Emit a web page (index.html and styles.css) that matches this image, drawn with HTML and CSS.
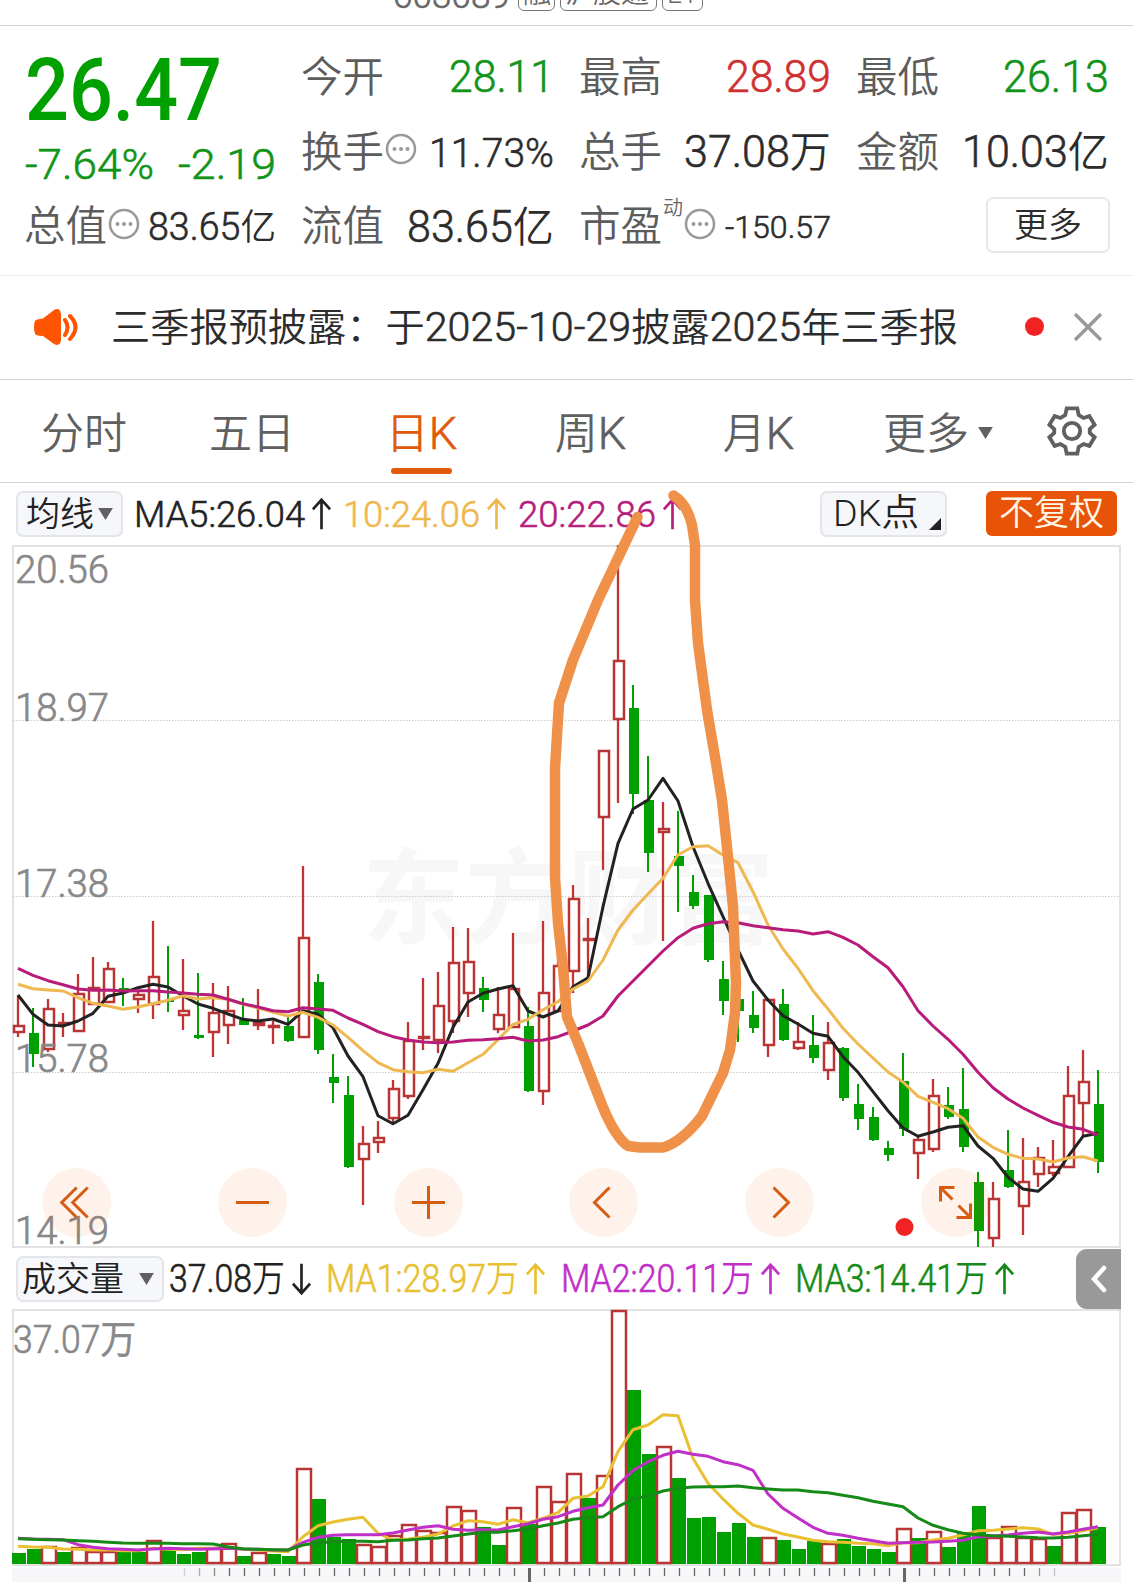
FILE: index.html
```html
<!DOCTYPE html>
<html lang="zh-CN">
<head>
<meta charset="utf-8">
<title>日K</title>
<link rel="stylesheet" href="styles.css">
</head>
<body>
<div class="app">
  <header class="top">
    <span class="code" data-fit="117">603089</span>
    <span class="badge" data-fit="37">融</span><span class="badge" data-fit="97">沪股通</span><span class="badge" data-fit="41">L1</span>
  </header>

  <section class="quote">
    <div class="price">
      <div class="last"><span data-fit="197">26.47</span></div>
      <div class="change"><span data-fit="129">-7.64%</span><span data-fit="98">-2.19</span></div>
    </div>
    <div class="cell"><span class="label">今开</span><span class="val down" data-fit="105">28.11</span></div>
    <div class="cell"><span class="label">最高</span><span class="val up" data-fit="105">28.89</span></div>
    <div class="cell"><span class="label">最低</span><span class="val down" data-fit="106">26.13</span></div>
    <div class="cell"><span class="label">换手</span><svg class="info" viewBox="0 0 32 32"><circle cx="16" cy="16" r="14"/><path d="M9.5 16h.01M16 16h.01M22.500 16h.01"/></svg><span class="val mid" data-fit="125">11.73%</span></div>
    <div class="cell"><span class="label">总手</span><span class="val" data-fit="147">37.08<i>万</i></span></div>
    <div class="cell"><span class="label">金额</span><span class="val" data-fit="147">10.03<i>亿</i></span></div>
    <div class="cell"><span class="label">总值</span><svg class="info" viewBox="0 0 32 32"><circle cx="16" cy="16" r="14"/><path d="M9.5 16h.01M16 16h.01M22.500 16h.01"/></svg><span class="val small" data-fit="128">83.65<i>亿</i></span></div>
    <div class="cell"><span class="label">流值</span><span class="val" data-fit="147">83.65<i>亿</i></span></div>
    <div class="cell"><span class="label">市盈</span><sup>动</sup><svg class="info" viewBox="0 0 32 32"><circle cx="16" cy="16" r="14"/><path d="M9.5 16h.01M16 16h.01M22.500 16h.01"/></svg><span class="val tiny" data-fit="106">-150.57</span></div>
    <div class="cell"><button class="more">更多</button></div>
  </section>

  <section class="news">
    <svg class="horn" viewBox="0 0 44 36"><path d="M2 11Q0 12 0 18T2 26Q5 27 9 27L20 35Q26 38 27 31V5Q26 -2 20 1L9 9.500Q5 9.500 2 11Z" fill="#ff5500"/><path d="M31 11Q36 18 31 26M36 7Q47 18 36 30" fill="none" stroke="#ff5500" stroke-width="4" stroke-linecap="round"/></svg>
    <span class="headline" data-fit="847">三季报预披露：于<b>2025-10-29</b>披露<b>2025</b>年三季报</span>
    <span class="dot"></span>
    <svg class="close" viewBox="0 0 30 30"><path d="M2 2L28 28M28 2L2 28"/></svg>
  </section>

  <nav class="tabs">
    <span class="tab">分时</span>
    <span class="tab">五日</span>
    <span class="tab active">日<b>K</b></span>
    <span class="tab">周<b>K</b></span>
    <span class="tab">月<b>K</b></span>
    <span class="tab last-tab">更多<svg class="tri" viewBox="0 0 16 13"><path d="M0 0H16L8 13Z"/></svg></span>
    <svg class="gear" viewBox="0 0 52 52"><path d="M20.500 2.500H31.500L33 9.500L38 12.500L44 10.500L49.500 19.500L44.500 24V28L49.500 32.500L44 41.500L38 39.500L33 42.500L31.500 49.500H20.500L19 42.500L14 39.500L8 41.500L2.500 32.500L7.500 28V24L2.500 19.500L8 10.500L14 12.500L19 9.500Z"/><circle cx="26" cy="26" r="8.500"/></svg>
  </nav>

  <div class="bar ma">
    <button class="pick">均线<svg class="tri" viewBox="0 0 16 13"><path d="M0 0H16L8 13Z"/></svg></button>
    <span class="ind black"><span data-fit="171">MA5:26.04</span><svg viewBox="0 0 20 34"><path d="M10 33V2M1 12L10 2L19 12"/></svg></span>
    <span class="ind gold"><span data-fit="137">10:24.06</span><svg viewBox="0 0 20 34"><path d="M10 33V2M1 12L10 2L19 12"/></svg></span>
    <span class="ind plum"><span data-fit="138">20:22.86</span><svg viewBox="0 0 20 34"><path d="M10 33V2M1 12L10 2L19 12"/></svg></span>
    <button class="pick dk"><span data-fit="86">DK点</span><svg class="corner" viewBox="0 0 12 12"><path d="M12 0V12H0Z"/></svg></button>
    <button class="adjust">不复权</button>
  </div>

  <svg class="kline" id="kline" viewBox="0 545 1133 703"></svg>

  <div class="bar vol">
    <button class="pick wide">成交量<svg class="tri" viewBox="0 0 16 13"><path d="M0 0H16L8 13Z"/></svg></button>
    <span class="ind black"><span data-fit="116">37.08<i>万</i></span><svg viewBox="0 0 20 34"><path d="M10 1V32M1 22L10 32L19 22"/></svg></span>
    <span class="ind yellow"><span data-fit="193">MA1:28.97<i>万</i></span><svg viewBox="0 0 20 34"><path d="M10 33V2M1 12L10 2L19 12"/></svg></span>
    <span class="ind violet"><span data-fit="193">MA2:20.11<i>万</i></span><svg viewBox="0 0 20 34"><path d="M10 33V2M1 12L10 2L19 12"/></svg></span>
    <span class="ind green"><span data-fit="193">MA3:14.41<i>万</i></span><svg viewBox="0 0 20 34"><path d="M10 33V2M1 12L10 2L19 12"/></svg></span>
    <button class="fold"><svg viewBox="0 0 16 28"><path d="M13 3L3 14L13 25"/></svg></button>
  </div>

  <svg class="volume" id="volume" viewBox="0 1309 1133 273"></svg>

  <svg class="mark" viewBox="0 0 1133 1582"><path d="M637.500 517L598 600L573 660L559 703L555 768V877L558 923L563 967L567 1017L578 1043L602 1105Q615 1137 628 1146L640 1147.500H663Q682 1142 702 1116L723 1073L730 1050L735 1013L736 983L733 907L728 857L722 800L715 757L707 710L698 643L695 600V545L692 525Q687 504 673.500 495.500"/></svg>
</div>
<script src="chart.js"></script>
</body>
</html>
```
FILE: styles.css
```css
* { box-sizing: border-box; }
body { margin: 0; background: #fff; font-family: Roboto, "Noto Sans CJK SC", sans-serif; font-weight: 350; color: #2c2c2c; }
button { font: inherit; color: inherit; padding: 0; margin: 0; }
i, b { font-style: normal; font-weight: 350; }
svg { display: block; flex: none; }
.app { position: relative; width: 1133px; height: 1582px; overflow: hidden; display: flex; flex-direction: column; }
[data-fit] { display: inline-block; white-space: nowrap; flex: none; }
.fit-in { display: inline-block; transform-origin: 0 50%; white-space: nowrap; }
.val, .change, .ind, .headline b, .tab b, .code { -webkit-text-stroke: .6px currentColor; }
.val i, .ind i { -webkit-text-stroke: 0; }

.top { height: 26px; border-bottom: 1px solid #d4d4d4; display: flex; align-items: flex-end; padding: 0 0 14px 393px; gap: 5px; color: #666; }
.code { font-size: 36px; line-height: 36px; margin: 0 3px -3px 0; }
.badge { border: 1.500px solid #777; border-radius: 6px; font-size: 28px; line-height: 39px; height: 38px; padding: 0 4px; flex: none; }

.quote { height: 250px; border-bottom: 1px solid #ececec; display: grid; grid-template-columns: 251px 252px 251px 252px; column-gap: 26px; grid-template-rows: 75px 74px 75px; padding: 13px 0 0 25px; }
.price { grid-row: span 2; color: #00a000; }
.last { height: 96px; line-height: 102px; font-size: 87px; font-weight: 500; }
.change { display: flex; justify-content: space-between; font-size: 43px; line-height: 60px; color: #12941a; margin-top: -1px; }
.cell { display: flex; align-items: center; position: relative; }
.label { font-size: 41.500px; line-height: 60px; color: #5c5c5c; padding-top: 3px; margin-left: -1px; }
.val { margin-left: auto; font-size: 44px; line-height: 60px; padding-top: 3px; }
.val i { font-size: 42px; }
.down, .up { padding-top: 1px; }
.mid { font-size: 41px; padding-top: 3px; }
.small { font-size: 38px; padding-top: 4px; }
.small i { font-size: 36px; }
.tiny { font-size: 32px; padding-top: 3px; }
.down { color: #12941a; }
.up { color: #d03030; }
.info { width: 32px; height: 32px; margin: -4px 0 0 1px; fill: none; stroke: #999; stroke-width: 2.500; stroke-linecap: round; }
.info path { stroke-width: 4; }
sup { font-size: 20px; line-height: 22px; color: #666; margin: -35px 0 0 1px; }
.more { width: 124px; height: 56px; border: 2px solid #e8e8e8; border-radius: 7px; background: #fff; font-size: 34px; line-height: 46px; margin: -1px -1px 0 auto; }

.news { height: 104px; border-bottom: 1px solid #d4d4d4; display: flex; align-items: center; padding-left: 34px; }
.horn { width: 44px; height: 36px; margin-top: -2px; }
.headline { margin-left: 33px; font-size: 39px; line-height: 60px; }
.headline b { font-size: 41px; }
.dot { width: 19px; height: 19px; border-radius: 50%; background: #f02222; margin-left: 67px; margin-top: -2px; }
.close { width: 30px; height: 30px; margin: -1px 0 0 29px; fill: none; stroke: #999; stroke-width: 3.500; }

.tabs { height: 103px; border-bottom: 1px solid #d4d4d4; display: grid; grid-template-columns: 168px 168px 171px 167px 169px 190px 1fr; align-items: center; }
.tab { position: relative; font-size: 43px; line-height: 72px; color: #606060; text-align: center; height: 66px; white-space: nowrap; }
.tab b { font-size: 45px; }
.tab.active { color: #e05a0c; }
.tab.active::after { content: ""; position: absolute; left: 55px; bottom: -10px; width: 61px; height: 6px; border-radius: 3px; background: #e05a0c; }
.tri { width: 15px; height: 12px; fill: #606060; display: inline-block; vertical-align: 8px; margin-left: 9px; }
.last-tab .tri { vertical-align: 10px; }
.gear { width: 50px; height: 52px; fill: none; stroke: #606060; stroke-width: 4; margin-left: 14px; }

.bar { display: flex; align-items: center; flex: none; }
.ma { height: 62px; padding: 0 16px 1px 16px; }
.pick { height: 46px; border: 2px solid #e3e5e9; border-radius: 7px; background: #f6f7fb; font-size: 34px; line-height: 42px; color: #222; width: 107px; white-space: nowrap; }
.pick .tri { margin-left: 4px; vertical-align: 6px; }
.dk { position: relative; width: 127px; margin-left: auto; font-size: 37px; text-align: left; padding-left: 11px; }
.corner { position: absolute; right: 4px; bottom: 5px; width: 12px; height: 12px; fill: #222; }
.adjust { width: 131px; height: 45px; border: 0; border-radius: 6px; background: #e85407; color: #fff6e6; font-size: 35px; line-height: 44px; margin-left: 39px; }
.ind { display: flex; align-items: center; font-size: 37px; line-height: 46px; margin-left: 11px; gap: 7px; }
.ind + .ind { margin-left: 12px; }
.ind > span { padding-top: 3px; }
.ind svg { width: 19px; height: 34px; fill: none; stroke: currentColor; stroke-width: 2.800; }
.black { color: #222; }
.gold { color: #f0b84c; }
.plum { color: #b61c7c; }
.yellow { color: #e8c032; }
.violet { color: #c02fc8; }
.green { color: #168a16; }
.vol { height: 61px; padding: 0 12px 0 16px; }
.vol .ind { font-size: 38px; margin-left: 15.500px; }
.vol .ind > span { padding-top: 1px; }
.vol .ind i { font-size: 37px; }
.vol .wide { width: 148px; margin-right: -11px; text-align: left; padding-left: 4px; }
.wide .tri { margin-left: 15px; }
.fold { margin-left: auto; width: 45px; height: 60px; border: 0; border-radius: 11px 0 0 11px; background: #999; display: grid; place-items: center; }
.fold svg { width: 16px; height: 28px; fill: none; stroke: #fff; stroke-width: 4.500; stroke-linecap: round; }

.kline { width: 1133px; height: 703px; overflow: visible; }
.volume { width: 1133px; height: 273px; }
.frame { fill: none; stroke: #e2e2e2; stroke-width: 2; }
.grid { stroke: #ccc; stroke-width: 1; stroke-dasharray: 1.500 1.500; }
.axis { font-size: 39px; fill: #888; stroke: #888; stroke-width: .7; }
.watermark { font-size: 104px; font-weight: 700; fill: #f7f7f7; }
.rise { fill: none; stroke: #c03434; stroke-width: 2.300; }
.rise-body { fill: #fff; stroke: #b93434; stroke-width: 2.500; }
.fall { fill: #00a000; }
.line { fill: none; stroke-width: 3; stroke-linejoin: round; }
.tool circle { fill: #ff5500; fill-opacity: .08; }
.tool path { fill: none; stroke: #d65c14; stroke-width: 3; }
.ruler { fill: #f7f7fa; }
.tick { stroke: #666; stroke-width: 1.300; }
.mark { position: absolute; left: 0; top: 0; width: 1133px; height: 1582px; pointer-events: none; fill: none; stroke: #f0914a; stroke-width: 10.500; stroke-linecap: round; stroke-linejoin: round; }
```
FILE: chart.js
```js
// Squeeze numeric labels into the column width given by data-fit.
document.querySelectorAll('[data-fit]').forEach(function (el) {
  if (el.classList.contains('badge')) { el.style.width = el.dataset.fit + 'px'; return; }
  var inner = document.createElement('span');
  inner.className = 'fit-in';
  while (el.firstChild) inner.appendChild(el.firstChild);
  el.appendChild(inner);
  var w = +el.dataset.fit, natural = inner.getBoundingClientRect().width;
  el.style.width = w + 'px';
  inner.style.transform = 'scaleX(' + w / natural + ')';
});

// Each day: direction, high, body top, body bottom, low. Units are thirds of a pixel below y = 840.
var days = `r 465 556 578 590|g 503 579 643 680|r 477 503 630 637|r 519 546 552 590|r 403 460 575 575|r 351 440 495 495|r 367 384 490 490|g 414 444 454 497|r 450 463 479 520|r 243 409 495 537|g 317 481 486 517|r 357 509 527 570|g 400 585 595 598|r 430 516 578 650|r 437 510 558 613|g 473 540 556 556|r 447 547 558 570|r 543 556 564 613|g 530 559 604 607|r 79 291 594 594|g 403 427 630 643|g 642 711 730 789|g 708 765 982 985|r 857 910 959 1095|r 843 890 909 938|r 720 745 838 850|r 546 600 770 777|r 413 588 595 630|r 396 496 603 640|r 261 367 545 578|r 264 364 461 531|g 410 444 479 517|r 440 522 569 578|r 278 443 564 564|g 500 559 753 756|r 243 457 756 796|r 300 376 515 515|r 135 175 395 458|r 234 294 302 410|r -269 -269 -67 90|r -885 -540 -360 -111|g -465 -395 -138 -78|g -252 -120 39 95|r -114 -35 -22 303|g -87 48 78 216|g 105 156 198 207|g 164 164 360 366|g 364 417 483 525|g 420 477 512 605|g 453 525 564 578|r 477 477 617 650|g 447 492 601 603|r 546 602 627 629|g 525 615 654 670|r 546 606 693 720|g 621 625 773 782|g 731 791 836 869|g 801 830 899 902|g 903 923 945 962|g 639 724 868 888|r 890 897 943 1018|r 717 765 930 935|g 741 795 830 836|g 684 807 922 935|g 996 1026 1173 1222|r 1026 1075 1196 1220|g 870 990 1042 1045|r 894 1023 1101 1184|r 920 950 1004 1041|r 900 979 1001 1008|r 678 765 985 985|r 629 724 793 890|g 690 791 965 998`
  .split('|').map(function (s) { return s.split(' '); });

var ma5 = [465,523,555,558,543,520,469,459,443,433,441,467,492,505,522,538,543,537,553,512,523,563,648,710,827,851,826,749,670,562,486,460,447,437,513,531,513,440,413,200,10,-93,-120,-185,-117,20,130,230,330,423,480,527,552,580,589,650,697,755,812,864,889,876,862,857,918,955,1012,1047,1054,1015,950,889,880];
var ma10 = [433,446,450,453,473,490,498,508,501,491,481,467,477,473,478,492,504,516,528,517,532,555,592,632,668,689,695,698,688,694,668,643,599,553,538,509,485,447,423,360,270,210,162,115,44,20,17,45,68,155,255,327,385,452,507,565,612,654,696,726,769,787,806,835,891,922,943,955,957,966,954,950,963];
var ma20 = [385,406,422,434,447,451,450,453,452,452,456,459,463,465,478,491,501,512,515,503,507,511,534,553,575,590,600,606,608,606,601,599,596,592,603,600,590,573,555,528,468,423,378,333,293,265,251,245,248,257,263,269,273,282,275,292,315,350,383,440,512,558,598,643,697,743,777,804,826,847,861,868,885];

// Volume bars and averages, thirds of a pixel below y = 1240.
var bars = [939,927,917,936,920,933,933,935,935,900,921,942,936,925,908,947,935,942,948,683,777,892,897,912,919,885,853,870,875,799,809,862,915,802,853,737,783,699,775,705,210,450,642,619,714,835,830,875,849,892,892,900,926,903,910,898,918,927,937,863,893,873,921,878,799,890,858,892,895,918,817,807,862];
var rising = [2,4,5,6,9,13,14,16,19,23,24,25,26,27,28,29,30,33,35,36,37,39,40,43,50,54,59,61,65,66,67,68,70,71];
var va = [919,921,922,927,928,930,929,932,932,925,928,929,925,925,922,928,930,933,935,890,857,846,838,832,880,900,897,892,882,858,842,845,853,839,848,835,818,775,768,740,635,569,555,524,527,655,730,777,820,855,868,882,891,901,905,907,910,911,917,908,908,900,895,885,872,871,867,863,867,883,880,872,863];
var vb = [895,897,898,899,914,922,926,928,930,927,925,926,928,926,925,927,928,930,930,907,892,886,884,884,884,879,870,862,857,868,871,869,870,860,851,838,830,814,803,795,735,692,665,646,634,643,649,665,674,691,762,805,834,862,880,886,895,902,910,908,907,906,904,901,890,888,885,880,876,882,876,868,860];
var vc = [896,898,899,900,902,904,907,909,910,910,910,911,911,912,921,926,928,929,930,915,908,905,904,904,905,901,900,896,894,888,882,877,877,872,867,857,849,838,833,830,800,777,768,753,745,741,740,740,738,743,747,750,750,755,758,766,773,784,792,800,834,856,869,880,884,887,889,891,893,894,892,887,883];

function x(i) { return 18 + 15 * i; }
function line(values, base, color) {
  return '<polyline class="line" stroke="' + color + '" points="' +
    values.map(function (v, i) { return x(i) + ',' + (base + v / 3).toFixed(1); }).join(' ') + '"/>';
}
function rect(cls, x0, y0, x1, y1) {
  return '<rect class="' + cls + '" x="' + x0 + '" y="' + y0 + '" width="' + (x1 - x0) + '" height="' + Math.max(y1 - y0, 1) + '"/>';
}
function label(text, px, py, w) {
  return '<text class="axis" x="' + px + '" y="' + py + '" textLength="' + w + '" lengthAdjust="spacingAndGlyphs">' + text + '</text>';
}

var k = '<text class="watermark" x="362" y="936" textLength="412" lengthAdjust="spacingAndGlyphs">东方财富</text>';
k += '<rect class="frame" x="13" y="546" width="1107" height="701"/>';
[720.5, 896.5, 1072.5].forEach(function (y) { k += '<path class="grid" d="M13 ' + y + 'H1120"/>'; });
days.forEach(function (d, i) {
  var p = d.slice(1).map(function (v) { return Math.round(840 + v / 3); }), c = x(i);
  if (d[0] === 'r') {
    k += '<path class="rise" d="M' + c + ' ' + p[0] + 'V' + p[1] + 'M' + c + ' ' + p[2] + 'V' + p[3] + '"/>';
    k += rect('rise-body', c - 4, p[1] + 1, c + 6, p[2] - 1);
  } else {
    k += rect('fall', c - 1, p[0], c + 1, p[3]) + rect('fall', c - 4, p[1], c + 6, p[2]);
  }
});
k += line(ma5, 840, '#222') + line(ma10, 840, '#efb850') + line(ma20, 840, '#b81c7a');
k += label('20.56', 15, 583, 94) + label('18.97', 15, 721, 94) + label('17.38', 15, 897, 94) + label('15.78', 15, 1072, 94) + label('14.19', 15, 1244, 94);
[['M0 -15L-15 0L0 15M11 -15L-4 0L11 15', 76.7], ['M-16.500 0H16.500', 252.5], ['M-16.500 0H16.500M0 -16.500V16.500', 428.5],
 ['M6 -15L-9 0L6 15', 603.5], ['M-6 -15L9 0L-6 15', 779.5],
 ['M-15 -1V-15H-1M-15 -15L-3 -3M3 3L15 15M15 1V15H1', 955.5]].forEach(function (b) {
  k += '<g class="tool" transform="translate(' + b[1] + ' 1202.500)"><circle r="34.500"/><path d="' + b[0] + '"/></g>';
});
k += '<circle cx="904.500" cy="1227" r="9" fill="#f02222"/>';
document.getElementById('kline').innerHTML = k;

var v = '<rect class="frame" x="13" y="1310" width="1107" height="255"/>';
bars.forEach(function (t, i) {
  var y = Math.round(1240 + t / 3), c = x(i);
  if (rising.indexOf(i) < 0) v += rect('fall', c - 6, y, c + 8, 1564);
});
bars.forEach(function (t, i) {
  var y = Math.round(1240 + t / 3), c = x(i);
  if (rising.indexOf(i) >= 0) v += rect('rise-body', c - 6, y + 1, c + 8, 1563);
});
v += line(va, 1240, '#e8c032') + line(vb, 1240, '#c02fc8') + line(vc, 1240, '#168a16');
v += label('37.07万', 13, 1353, 123);
v += '<rect class="ruler" x="12" y="1568" width="1109" height="14"/>';
for (var n = 0; n < 59; n++) {
  var tx = 184.5 + 15 * n, major = n === 23 || n === 48;
  v += '<path class="tick" d="M' + tx + ' 1568V' + (major ? 1582 : 1576) + '"' +
    (major ? ' style="stroke-width:3"' : '') + ' opacity="' + Math.min(1, (n + 1) / 4, (59 - n) / 3) + '"/>';
}
document.getElementById('volume').innerHTML = v;
```
